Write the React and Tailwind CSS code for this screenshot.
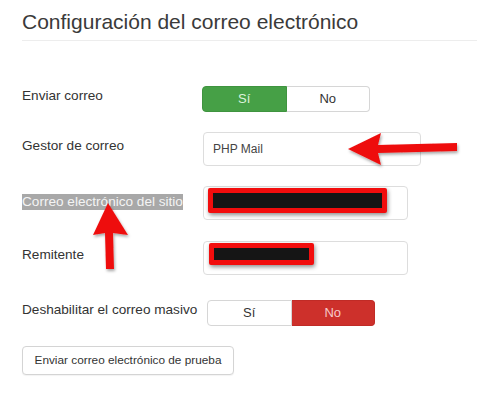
import React from 'react';

const Toggle = ({ active }) => (
  <div className="flex h-[26px] w-[168px] text-[13px]">
    <div
      className={`flex-1 flex items-center justify-center rounded-l-[4px] border ${
        active === 'si'
          ? 'bg-[#46a046] border-[#3f943f] text-[#dcf2dc]'
          : 'bg-white border-[#d6d6d6] text-[#333]'
      }`}
    >
      Sí
    </div>
    <div
      className={`flex-1 flex items-center justify-center rounded-r-[4px] border border-l-0 ${
        active === 'no'
          ? 'bg-[#cd302b] border-[#c02b26] text-[#f6caca]'
          : 'bg-white border-[#d6d6d6] text-[#333]'
      }`}
    >
      No
    </div>
  </div>
);

const Redacted = ({ width }) => (
  <div
    className="h-full border-[5px] border-[#f20d0d] bg-[#151515] rounded-[2px] shadow-[1px_2px_4px_rgba(0,0,0,0.45)]"
    style={{ width }}
  />
);

export default function App() {
  return (
    <div className="relative w-[477px] h-[408px] overflow-hidden bg-white font-['Liberation_Sans',Arial,sans-serif] text-[#333]">
      {/* Header */}
      <div className="pl-[22px] pt-[9px]">
        <h1 className="text-[21px] leading-[26px] text-[#3a3a3a]">Configuración del correo electrónico</h1>
        <div className="mt-[5px] border-b border-[#ededed]" />
      </div>

      {/* Enviar correo */}
      <div className="flex items-center mt-[45px] pl-[22px]">
        <div className="w-[180px] text-[13.6px] mb-[5px]">Enviar correo</div>
        <Toggle active="si" />
      </div>

      {/* Gestor de correo */}
      <div className="flex items-center mt-[20px] pl-[22px]">
        <div className="w-[181px] text-[13.6px] mb-[5px]">Gestor de correo</div>
        <div className="w-[218px] h-[34px] border border-[#ddd] rounded-[4px] flex items-center pl-[9px] text-[12px] text-[#444]">
          PHP Mail
        </div>
      </div>

      {/* Correo electronico del sitio */}
      <div className="flex items-center mt-[20px] pl-[22px]">
        <div className="w-[181px] mb-[4px]">
          <span className="bg-[#a8a8a8] text-[#f4f4f4] text-[13.6px] leading-[16px] inline-block">Correo electrónico del sitio</span>
        </div>
        <div className="w-[205px] h-[34px] border border-[#ddd] rounded-[4px] pl-[4px] pt-[1px] pb-[6px]">
          <Redacted width={179} />
        </div>
      </div>

      {/* Remitente */}
      <div className="flex items-center mt-[21px] pl-[22px]">
        <div className="w-[181px] text-[13.6px] mb-[6px]">Remitente</div>
        <div className="w-[205px] h-[34px] border border-[#ddd] rounded-[4px] pl-[5px] pt-[1px] pb-[9px]">
          <Redacted width={105} />
        </div>
      </div>

      {/* Deshabilitar */}
      <div className="flex items-center mt-[25px] pl-[22px]">
        <div className="w-[185px] text-[13.6px] mb-[5px]">Deshabilitar el correo masivo</div>
        <Toggle active="no" />
      </div>

      {/* Button */}
      <div className="pl-[22px] mt-[20px]">
        <button className="h-[29px] w-[212px] border border-[#d4d4d4] rounded-[4px] bg-white text-[11.8px] text-[#333] shadow-[0_1px_1px_rgba(0,0,0,0.05)]">
          Enviar correo electrónico de prueba
        </button>
      </div>

      {/* Annotation arrows */}
      <svg className="absolute inset-0 pointer-events-none" width="477" height="408" viewBox="0 0 477 408">
        <defs>
          <filter id="sh" x="-20%" y="-20%" width="140%" height="140%">
            <feDropShadow dx="1" dy="2" stdDeviation="1.5" floodColor="#000" floodOpacity="0.35" />
          </filter>
        </defs>
        <polygon
          filter="url(#sh)"
          fill="#ee1111"
          points="348,149 381,133 378,145 457,143 457,151 378,153 381,165"
        />
        <polygon
          filter="url(#sh)"
          fill="#ee1111"
          points="108,203 128,235 113,233 114,269 106,269 105,233 93,235"
        />
      </svg>
    </div>
  );
}
